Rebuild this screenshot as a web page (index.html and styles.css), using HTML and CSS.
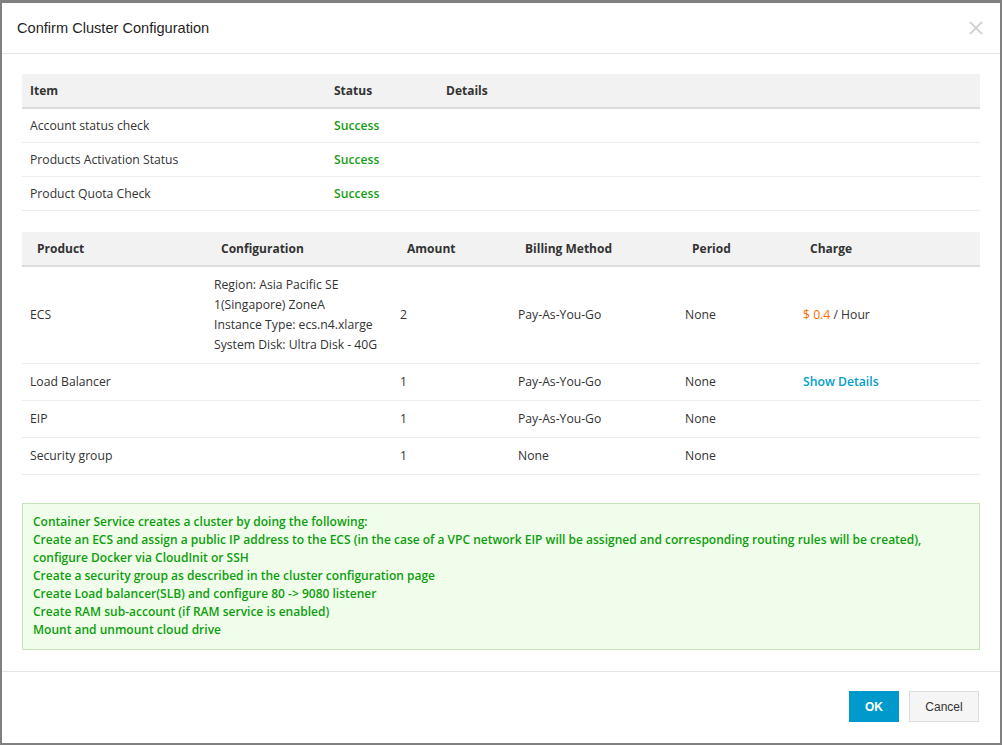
FILE: index.html
```html
<!DOCTYPE html>
<html>
<head>
<meta charset="utf-8">
<title>Confirm Cluster Configuration</title>
<link rel="stylesheet" href="styles.css">
</head>
<body>
<div class="dialog">
  <div class="dlg-head">
    <div class="dlg-title">Confirm Cluster Configuration</div>
    <svg class="close" width="14" height="14" viewBox="0 0 14 14"><path d="M1 1 L13 13 M13 1 L1 13" stroke="#c9c9c9" stroke-width="1.6" fill="none"/></svg>
  </div>
  <div class="dlg-body">
    <table class="tbl check">
      <colgroup><col class="c-item"><col class="c-status"><col></colgroup>
      <thead><tr><th>Item</th><th>Status</th><th>Details</th></tr></thead>
      <tbody>
        <tr><td>Account status check</td><td class="ok">Success</td><td></td></tr>
        <tr><td>Products Activation Status</td><td class="ok">Success</td><td></td></tr>
        <tr><td>Product Quota Check</td><td class="ok">Success</td><td></td></tr>
      </tbody>
    </table>
    <table class="tbl products">
      <colgroup><col class="p1"><col class="p2"><col class="p3"><col class="p4"><col class="p5"><col></colgroup>
      <thead><tr><th>Product</th><th>Configuration</th><th>Amount</th><th>Billing Method</th><th>Period</th><th>Charge</th></tr></thead>
      <tbody>
        <tr><td>ECS</td><td>Region: Asia Pacific SE 1(Singapore) ZoneA<br>Instance Type: ecs.n4.xlarge<br>System Disk: Ultra Disk - 40G</td><td>2</td><td>Pay-As-You-Go</td><td>None</td><td><span class="price">$ 0.4</span> / Hour</td></tr>
        <tr><td>Load Balancer</td><td></td><td>1</td><td>Pay-As-You-Go</td><td>None</td><td><span class="link">Show Details</span></td></tr>
        <tr><td>EIP</td><td></td><td>1</td><td>Pay-As-You-Go</td><td>None</td><td></td></tr>
        <tr><td>Security group</td><td></td><td>1</td><td>None</td><td>None</td><td></td></tr>
      </tbody>
    </table>
    <div class="notice">
      <div>Container Service creates a cluster by doing the following:</div>
      <div>Create an ECS and assign a public IP address to the ECS (in the case of a VPC network EIP will be assigned and corresponding routing rules will be created),<br>configure Docker via CloudInit or SSH</div>
      <div>Create a security group as described in the cluster configuration page</div>
      <div>Create Load balancer(SLB) and configure 80 -&gt; 9080 listener</div>
      <div>Create RAM sub-account (if RAM service is enabled)</div>
      <div>Mount and unmount cloud drive</div>
    </div>
  </div>
  <div class="dlg-foot">
    <button class="btn btn-primary">OK</button>
    <button class="btn btn-default">Cancel</button>
  </div>
</div>
</body>
</html>
```

FILE: styles.css
```css
html, body {
  margin: 0;
  padding: 0;
}
body {
  background: #808080;
  padding: 3px 2px 2px 2px;
  font-family: "Open Sans", "Noto Sans", sans-serif;
  font-size: 12px;
  color: #333;
}
.dialog {
  width: 998px;
  height: 740px;
  background: #fff;
  display: flex;
  flex-direction: column;
  box-sizing: border-box;
}
.dlg-head {
  height: 50px;
  border-bottom: 1px solid #e5e5e5;
  display: flex;
  align-items: center;
  justify-content: space-between;
  padding: 0 17px 0 15px;
  flex: none;
}
.dlg-title {
  font-family: "Liberation Sans", Arial, sans-serif;
  font-size: 14.6px;
  color: #1f1f1f;
}
.close {
  display: block;
}
.dlg-body {
  flex: 1;
  padding: 20px 20px 20px 20px;
}
.tbl {
  width: 958px;
  border-collapse: collapse;
  table-layout: fixed;
}
.tbl th {
  background: #f2f2f2;
  height: 33px;
  padding: 0 8px;
  border-bottom: 2px solid #dcdcdc;
  text-align: left;
  font-weight: 700;
  font-size: 12px;
  color: #333;
}
.tbl td {
  padding: 7px 8px;
  line-height: 19px;
  border-bottom: 1px solid #ededed;
  vertical-align: middle;
  font-size: 12.2px;
}
.c-item { width: 304px; }
.c-status { width: 112px; }
.ok {
  color: #189d18;
  font-weight: 600;
}
.products {
  margin-top: 21px;
}
.products th {
  padding-left: 15px;
}
.products td {
  padding: 8px 8px;
  line-height: 20px;
}
.p1 { width: 184px; }
.p2 { width: 186px; }
.p3 { width: 118px; }
.p4 { width: 167px; }
.p5 { width: 118px; }
.price {
  color: #ff6a00;
}
.link {
  color: #00a0cc;
  font-weight: 600;
}
.notice {
  margin-top: 28px;
  border: 1px solid #c8e3bb;
  background: #f1fdeb;
  padding: 9px 10px 10px 10px;
  line-height: 18px;
  color: #0d9e0d;
  font-weight: 600;
}
.dlg-foot {
  flex: none;
  border-top: 1px solid #e5e5e5;
  display: flex;
  justify-content: flex-end;
  align-items: flex-start;
  gap: 10px;
  padding: 19px 21px 0 0;
  box-sizing: border-box;
  height: 72px;
}
.btn {
  height: 31px;
  font-family: "Liberation Sans", Arial, sans-serif;
  font-size: 12px;
  cursor: pointer;
  padding: 0;
  margin: 0;
}
.btn-primary {
  width: 50px;
  background: #0099cc;
  border: none;
  color: #fff;
  font-weight: 700;
}
.btn-default {
  width: 70px;
  background: #f5f5f5;
  border: 1px solid #dddddd;
  color: #333;
}
```
